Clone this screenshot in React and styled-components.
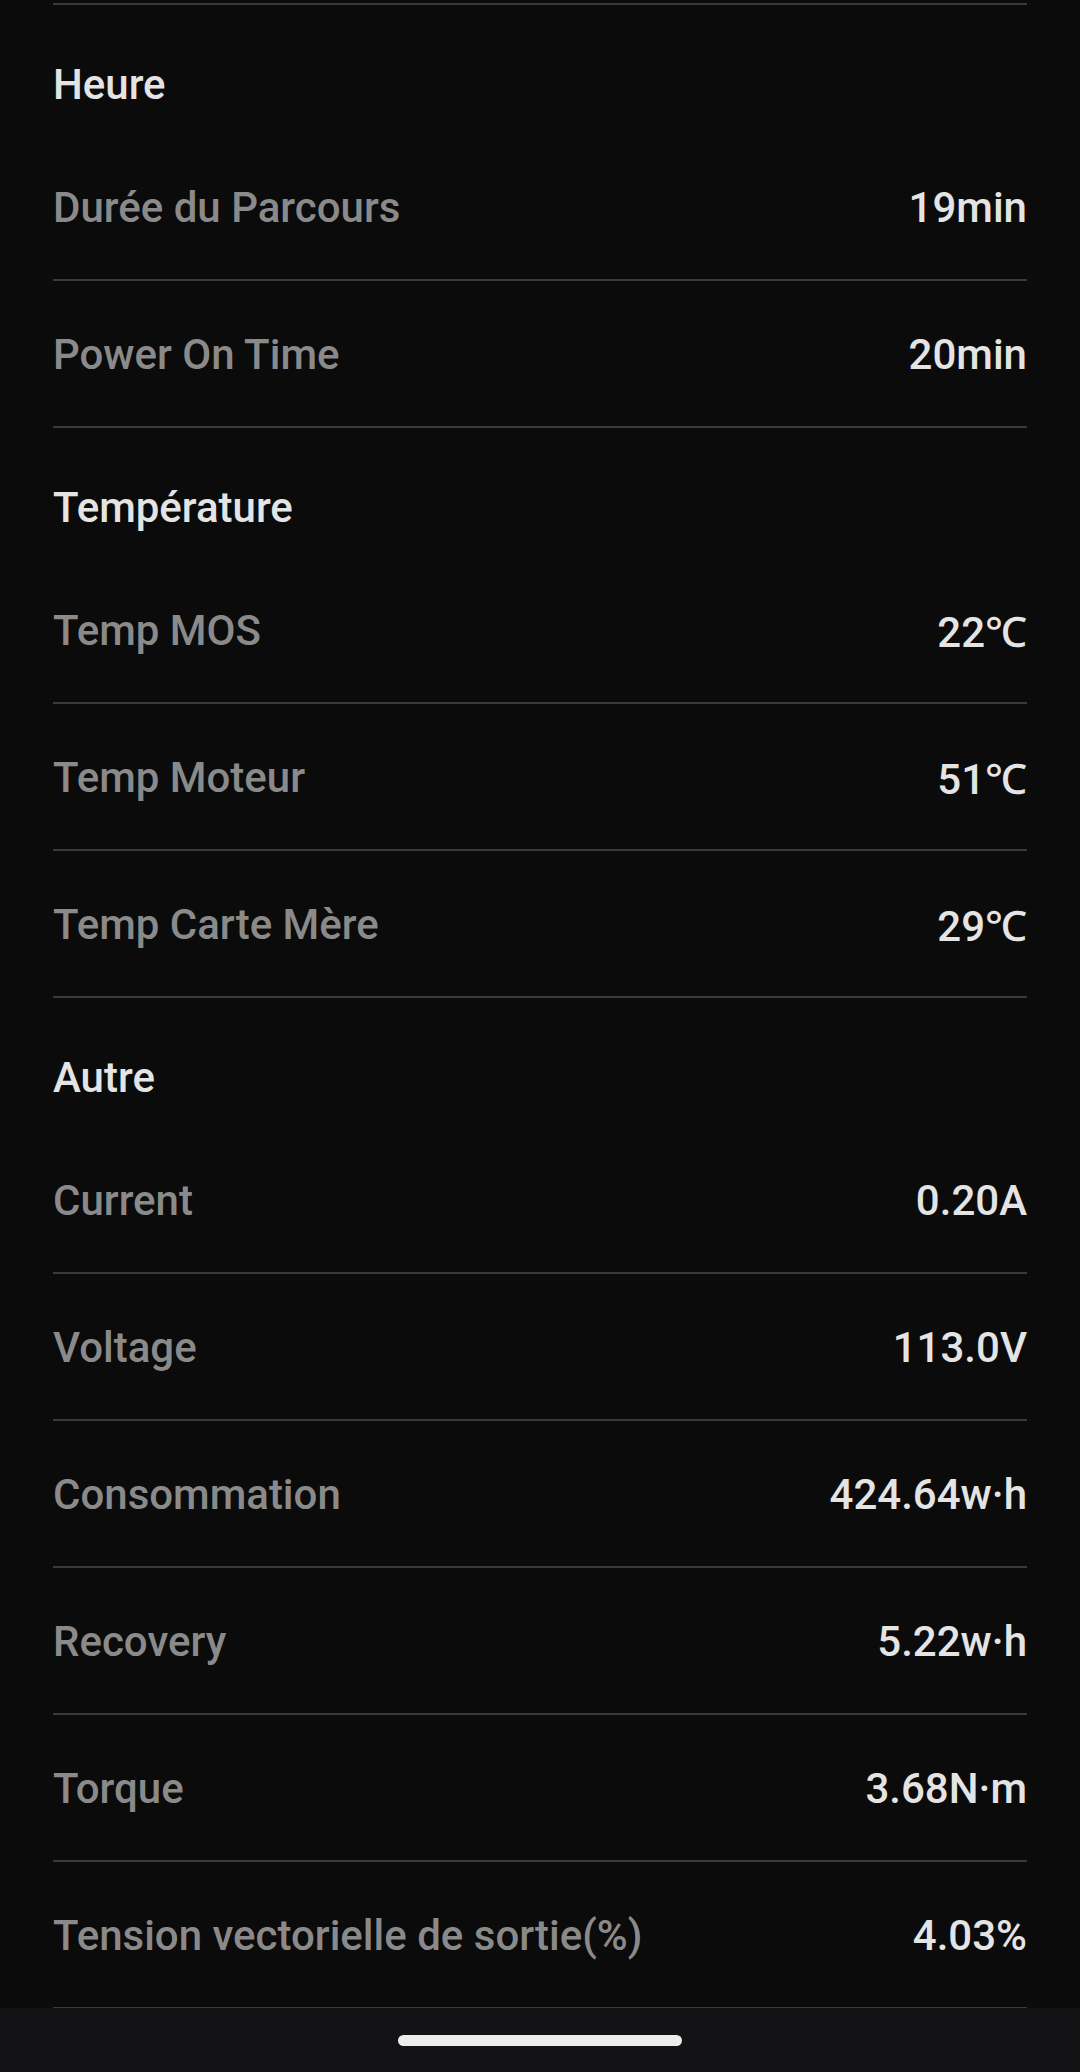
import React from "react";
import styled, { createGlobalStyle } from "styled-components";

const GlobalStyle = createGlobalStyle`
  html, body { margin: 0; padding: 0; background: #0b0b0b; }
  body { font-family: Roboto, "Noto Sans", "Liberation Sans", sans-serif; }
  * { box-sizing: border-box; }
`;

const Screen = styled.div`
  width: 1080px;
  height: 2072px;
  display: flex;
  flex-direction: column;
  background: #0b0b0b;
  overflow: hidden;
`;

const Content = styled.div`
  flex: 1;
  padding: 3px 53px 0;
  display: flex;
  flex-direction: column;
  overflow: hidden;
`;

const Divider = styled.div`
  height: 2px;
  background: #3a3a3a;
  flex-shrink: 0;
`;

const SectionHeader = styled.div`
  height: 129px;
  padding-top: 29px;
  display: flex;
  align-items: center;
  font-size: 42px;
  font-weight: 500;
  color: #e4e4e4;
  flex-shrink: 0;
`;

const Row = styled.div`
  height: 145px;
  padding-top: 2px;
  display: flex;
  align-items: center;
  justify-content: space-between;
  flex-shrink: 0;
`;

const Label = styled.span`
  font-size: 42px;
  font-weight: 500;
  color: #8a8a8a;
  white-space: nowrap;
`;

const Value = styled.span`
  font-size: 42px;
  font-weight: 500;
  color: #e4e4e4;
  white-space: nowrap;
`;

const NavBar = styled.div`
  height: 64px;
  flex-shrink: 0;
  background: #131315;
  display: flex;
  justify-content: center;
  padding-top: 27px;
`;

const Handle = styled.div`
  width: 284px;
  height: 11px;
  border-radius: 6px;
  background: #ececec;
`;

const sections = [
  {
    title: "Heure",
    rows: [
      ["Durée du Parcours", "19min"],
      ["Power On Time", "20min"],
    ],
  },
  {
    title: "Température",
    rows: [
      ["Temp MOS", "22℃"],
      ["Temp Moteur", "51℃"],
      ["Temp Carte Mère", "29℃"],
    ],
  },
  {
    title: "Autre",
    rows: [
      ["Current", "0.20A"],
      ["Voltage", "113.0V"],
      ["Consommation", "424.64w·h"],
      ["Recovery", "5.22w·h"],
      ["Torque", "3.68N·m"],
      ["Tension vectorielle de sortie(%)", "4.03%"],
    ],
  },
];

export default function App() {
  return (
    <>
      <GlobalStyle />
      <Screen>
        <Content>
          <Divider />
          {sections.map((s) => (
            <React.Fragment key={s.title}>
              <SectionHeader>{s.title}</SectionHeader>
              {s.rows.map(([l, v]) => (
                <React.Fragment key={l}>
                  <Row>
                    <Label>{l}</Label>
                    <Value>{v}</Value>
                  </Row>
                  <Divider />
                </React.Fragment>
              ))}
            </React.Fragment>
          ))}
        </Content>
        <NavBar>
          <Handle />
        </NavBar>
      </Screen>
    </>
  );
}
